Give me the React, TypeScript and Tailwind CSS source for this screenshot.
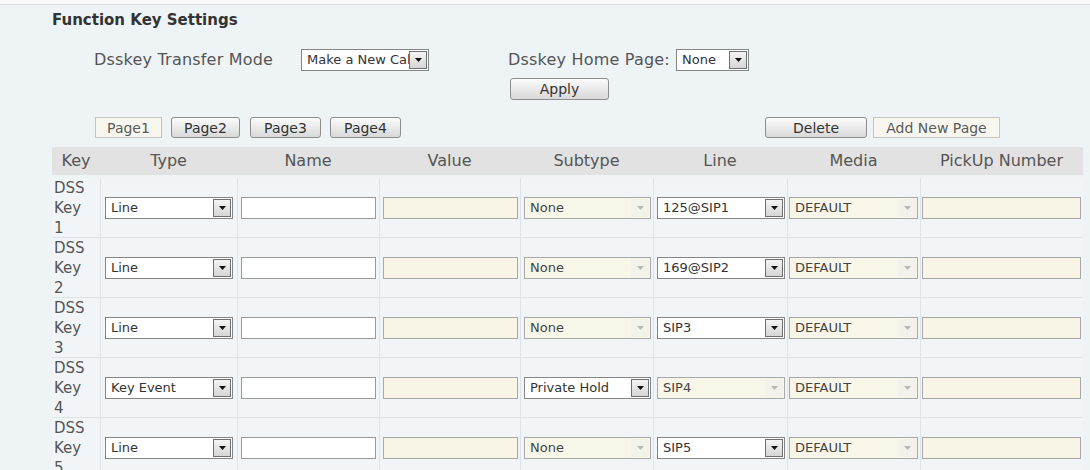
import React from 'react';
import { clsx, type ClassValue } from 'clsx';
import { twMerge } from 'tailwind-merge';

function cn(...inputs: ClassValue[]) {
  return twMerge(clsx(inputs));
}

type Row = {
  key: number;
  type: string;
  subtype: string;
  subtypeOn: boolean;
  line: string;
  lineOn: boolean;
};

const rows: Row[] = [
  { key: 1, type: 'Line', subtype: 'None', subtypeOn: false, line: '125@SIP1', lineOn: true },
  { key: 2, type: 'Line', subtype: 'None', subtypeOn: false, line: '169@SIP2', lineOn: true },
  { key: 3, type: 'Line', subtype: 'None', subtypeOn: false, line: 'SIP3', lineOn: true },
  { key: 4, type: 'Key Event', subtype: 'Private Hold', subtypeOn: true, line: 'SIP4', lineOn: false },
  { key: 5, type: 'Line', subtype: 'None', subtypeOn: false, line: 'SIP5', lineOn: true },
];

const headers = ['Key', 'Type', 'Name', 'Value', 'Subtype', 'Line', 'Media', 'PickUp Number'];
const grid = 'grid grid-cols-[48px_137px_142px_141px_133px_134px_133px_163px]';

function Arrow({ on }: { on: boolean }) {
  return (
    <span
      className={cn(
        'flex h-[18px] w-[18px] shrink-0 items-center justify-center mr-[1px]',
        on
          ? 'border border-[#6f6f6f] bg-gradient-to-b from-[#f4f4f4] to-[#d6d6d6]'
          : 'bg-[#f3f2ea]'
      )}
    >
      <svg width="7" height="4" viewBox="0 0 7 4">
        <path d="M0 0h7L3.5 4z" fill={on ? '#111' : '#b8b8b8'} />
      </svg>
    </span>
  );
}

function Select({ value, on = true, className }: { value: string; on?: boolean; className?: string }) {
  return (
    <div
      className={cn(
        'flex h-[22px] items-center border',
        on ? 'border-[#858585] bg-white text-[#333]' : 'border-[#a8a8a8] bg-[#f8f6e8] text-[#444]',
        className
      )}
    >
      <span className="flex-1 overflow-hidden whitespace-nowrap pl-[5px] text-[13px] leading-[20px]">{value}</span>
      <Arrow on={on} />
    </div>
  );
}

function Input({ on = true }: { on?: boolean }) {
  return (
    <div
      className={cn(
        'h-[22px] w-full border',
        on ? 'border-[#9a9a9a] bg-white' : 'border-[#a8a8a8] bg-[#f8f5e6]'
      )}
    />
  );
}

function Button({ label, flat, className }: { label: string; flat?: boolean; className?: string }) {
  return (
    <div
      className={cn(
        'flex h-[21px] items-center justify-center text-[14px] leading-none',
        flat
          ? 'border border-[#c4c4c4] bg-[#f7f7ef] text-[#5a5a5a]'
          : 'rounded-[3px] border border-[#8e8e8e] bg-gradient-to-b from-[#fbfbfb] to-[#d9d9d9] text-[#333]',
        className
      )}
    >
      {label}
    </div>
  );
}

export default function App() {
  return (
    <div className="min-h-screen w-full overflow-hidden bg-[#eef3f5] font-['DejaVu_Sans',sans-serif] text-[#555]">
      <div className="h-[5px] border-b border-[#d9dcdd] bg-[#fafafa]" />
      <div className="pl-[52px]">
        <h1 className="mt-[5px] text-[15px] font-bold leading-[20px] text-[#333]">Function Key Settings</h1>

        <div className="ml-[42px] mt-[19px] flex">
          <div className="flex h-[22px] items-center">
            <span className="w-[207px] text-[16px] tracking-[0.2px]">Dsskey Transfer Mode</span>
            <Select value="Make a New Call" className="w-[128px]" />
          </div>
          <div className="ml-[79px] flex flex-col">
            <div className="flex h-[22px] items-center">
              <span className="w-[168px] text-[16px] tracking-[0.2px]">Dsskey Home Page:</span>
              <Select value="None" className="w-[73px]" />
            </div>
            <Button label="Apply" className="ml-[2px] mt-[7px] h-[22px] w-[99px]" />
          </div>
        </div>

        <div className="mt-[17px] flex items-center">
          <div className="ml-[43px] flex gap-[9px]">
            <Button label="Page1" flat className="w-[67px]" />
            <Button label="Page2" className="w-[69px]" />
            <Button label="Page3" className="ml-[1px] w-[71px]" />
            <Button label="Page4" className="w-[71px]" />
          </div>
          <div className="ml-[364px] flex gap-[6px]">
            <Button label="Delete" className="w-[102px]" />
            <Button label="Add New Page" flat className="w-[127px]" />
          </div>
        </div>

        <div className="mt-[9px] w-[1031px]">
          <div className={cn(grid, 'h-[28px] bg-[#e2e2e2] text-[16px]')}>
            {headers.map((h) => (
              <div key={h} className="flex items-center justify-center">
                {h}
              </div>
            ))}
          </div>
          <div className="mt-[3px] bg-[#f1f5f7]">
            {rows.map((r) => (
              <div key={r.key} className={cn(grid, 'h-[60px] border-b border-[#dde4e7]')}>
                <div className="flex flex-col pl-[2px] text-[15px] leading-[20px] text-[#555]">
                  <span>DSS</span>
                  <span>Key</span>
                  <span>{r.key}</span>
                </div>
                <div className="flex items-center border-l border-[#dde4e7] pl-[4px] pr-[4px]">
                  <Select value={r.type} className="w-full" />
                </div>
                <div className="flex items-center border-l border-[#dde4e7] pl-[3px] pr-[3px]">
                  <Input />
                </div>
                <div className="flex items-center border-l border-[#dde4e7] pl-[3px] pr-[2px]">
                  <Input on={false} />
                </div>
                <div className="flex items-center border-l border-[#dde4e7] pl-[3px] pr-[2px]">
                  <Select value={r.subtype} on={r.subtypeOn} className="w-full" />
                </div>
                <div className="flex items-center border-l border-[#dde4e7] pl-[3px] pr-[2px]">
                  <Select value={r.line} on={r.lineOn} className="w-full" />
                </div>
                <div className="flex items-center border-l border-[#dde4e7] pl-[1px] pr-[2px]">
                  <Select value="DEFAULT" on={false} className="w-full" />
                </div>
                <div className="flex items-center border-l border-[#dde4e7] pl-[1px] pr-[2px]">
                  <Input on={false} />
                </div>
              </div>
            ))}
          </div>
        </div>
      </div>
    </div>
  );
}
